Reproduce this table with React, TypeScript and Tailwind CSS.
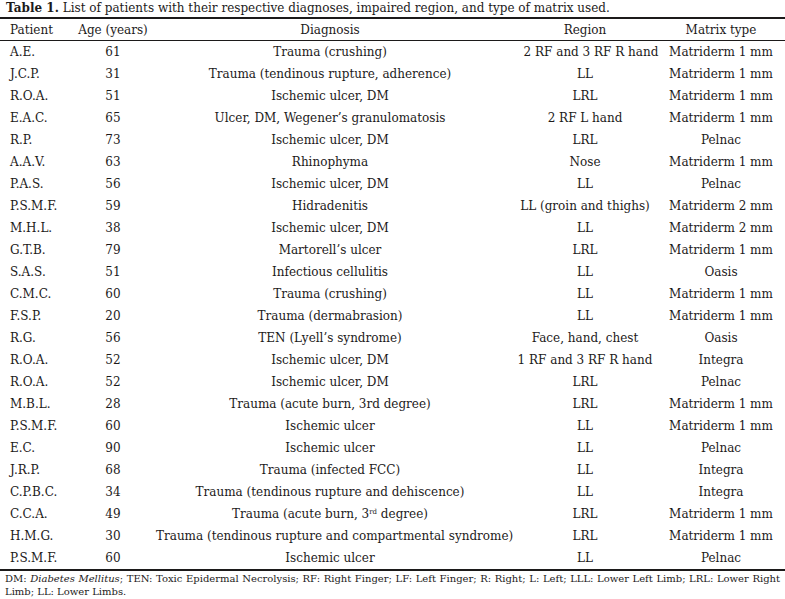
import React from 'react';

type Row = {
  patient: string;
  age: string;
  diagnosis: React.ReactNode;
  region: string;
  matrix: string;
};

const rows: Row[] = [
  { patient: 'A.E.', age: '61', diagnosis: 'Trauma (crushing)', region: '2 RF and 3 RF R hand', matrix: 'Matriderm 1 mm' },
  { patient: 'J.C.P.', age: '31', diagnosis: 'Trauma (tendinous rupture, adherence)', region: 'LL', matrix: 'Matriderm 1 mm' },
  { patient: 'R.O.A.', age: '51', diagnosis: 'Ischemic ulcer, DM', region: 'LRL', matrix: 'Matriderm 1 mm' },
  { patient: 'E.A.C.', age: '65', diagnosis: 'Ulcer, DM, Wegener’s granulomatosis', region: '2 RF L hand', matrix: 'Matriderm 1 mm' },
  { patient: 'R.P.', age: '73', diagnosis: 'Ischemic ulcer, DM', region: 'LRL', matrix: 'Pelnac' },
  { patient: 'A.A.V.', age: '63', diagnosis: 'Rhinophyma', region: 'Nose', matrix: 'Matriderm 1 mm' },
  { patient: 'P.A.S.', age: '56', diagnosis: 'Ischemic ulcer, DM', region: 'LL', matrix: 'Pelnac' },
  { patient: 'P.S.M.F.', age: '59', diagnosis: 'Hidradenitis', region: 'LL (groin and thighs)', matrix: 'Matriderm 2 mm' },
  { patient: 'M.H.L.', age: '38', diagnosis: 'Ischemic ulcer, DM', region: 'LL', matrix: 'Matriderm 2 mm' },
  { patient: 'G.T.B.', age: '79', diagnosis: 'Martorell’s ulcer', region: 'LRL', matrix: 'Matriderm 1 mm' },
  { patient: 'S.A.S.', age: '51', diagnosis: 'Infectious cellulitis', region: 'LL', matrix: 'Oasis' },
  { patient: 'C.M.C.', age: '60', diagnosis: 'Trauma (crushing)', region: 'LL', matrix: 'Matriderm 1 mm' },
  { patient: 'F.S.P.', age: '20', diagnosis: 'Trauma (dermabrasion)', region: 'LL', matrix: 'Matriderm 1 mm' },
  { patient: 'R.G.', age: '56', diagnosis: 'TEN (Lyell’s syndrome)', region: 'Face, hand, chest', matrix: 'Oasis' },
  { patient: 'R.O.A.', age: '52', diagnosis: 'Ischemic ulcer, DM', region: '1 RF and 3 RF R hand', matrix: 'Integra' },
  { patient: 'R.O.A.', age: '52', diagnosis: 'Ischemic ulcer, DM', region: 'LRL', matrix: 'Pelnac' },
  { patient: 'M.B.L.', age: '28', diagnosis: 'Trauma (acute burn, 3rd degree)', region: 'LRL', matrix: 'Matriderm 1 mm' },
  { patient: 'P.S.M.F.', age: '60', diagnosis: 'Ischemic ulcer', region: 'LL', matrix: 'Matriderm 1 mm' },
  { patient: 'E.C.', age: '90', diagnosis: 'Ischemic ulcer', region: 'LL', matrix: 'Pelnac' },
  { patient: 'J.R.P.', age: '68', diagnosis: 'Trauma (infected FCC)', region: 'LL', matrix: 'Integra' },
  { patient: 'C.P.B.C.', age: '34', diagnosis: 'Trauma (tendinous rupture and dehiscence)', region: 'LL', matrix: 'Integra' },
  {
    patient: 'C.C.A.',
    age: '49',
    diagnosis: (
      <>
        Trauma (acute burn, 3<sup className="text-[7px] -top-[4px]">rd</sup> degree)
      </>
    ),
    region: 'LRL',
    matrix: 'Matriderm 1 mm',
  },
  { patient: 'H.M.G.', age: '30', diagnosis: 'Trauma (tendinous rupture and compartmental syndrome)', region: 'LRL', matrix: 'Matriderm 1 mm' },
  { patient: 'P.S.M.F.', age: '60', diagnosis: 'Ischemic ulcer', region: 'LL', matrix: 'Pelnac' },
];

const cols = 'grid grid-cols-[70px_86px_348px_162px_110px]';

const App: React.FC = () => {
  return (
    <div className="w-[785px] h-[599px] bg-white text-[#1c1a1a] font-['DejaVu_Serif',serif] text-[12px] overflow-hidden">
      <p className="h-[17px] pl-[6px] pt-[1px] leading-[14px] whitespace-nowrap">
        <span className="font-bold">Table 1.</span> List of patients with their respective diagnoses, impaired region, and
        type of matrix used.
      </p>

      <div className="border-t-2 border-[#1c1a1a]">
        <div className={`${cols} h-[22px] items-center border-b border-[#1c1a1a]`}>
          <div className="pl-[10px]">Patient</div>
          <div className="text-center">Age (years)</div>
          <div className="text-center">Diagnosis</div>
          <div className="text-center">Region</div>
          <div className="text-center">Matrix type</div>
        </div>

        {rows.map((r, i) => (
          <div key={i} className={`${cols} h-[22px] items-center whitespace-nowrap`}>
            <div className="pl-[10px]">{r.patient}</div>
            <div className="text-center">{r.age}</div>
            <div className="text-center">{r.diagnosis}</div>
            <div className={i === 0 ? 'text-center pl-[12px]' : 'text-center'}>{r.region}</div>
            <div className="text-center">{r.matrix}</div>
          </div>
        ))}
      </div>

      <div className="border-t-2 border-[#1c1a1a] pt-[1px] px-[5px] text-[10px] leading-[13px] text-justify">
        DM: <i>Diabetes Mellitus</i>; TEN: Toxic Epidermal Necrolysis; RF: Right Finger; LF: Left Finger; R: Right; L:
        Left; LLL: Lower Left Limb; LRL: Lower Right Limb; LL: Lower Limbs.
      </div>
    </div>
  );
};

export default App;
